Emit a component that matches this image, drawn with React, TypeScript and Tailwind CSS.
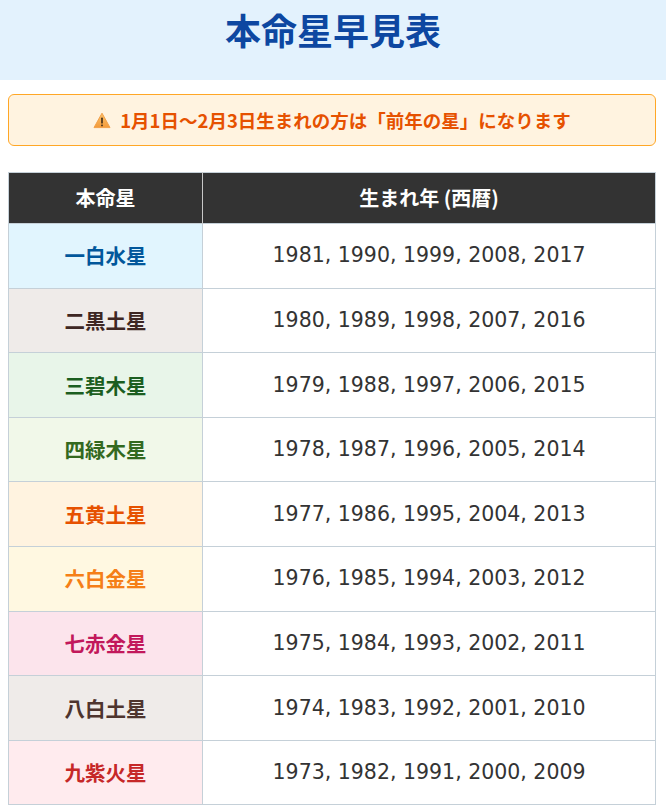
import React from "react";

const rows = [
  { name: "一白水星", bg: "bg-[#e1f5fe]", fg: "text-[#01579b]", years: "1981, 1990, 1999, 2008, 2017" },
  { name: "二黒土星", bg: "bg-[#efebe9]", fg: "text-[#3e2723]", years: "1980, 1989, 1998, 2007, 2016" },
  { name: "三碧木星", bg: "bg-[#e8f5e9]", fg: "text-[#1b5e20]", years: "1979, 1988, 1997, 2006, 2015" },
  { name: "四緑木星", bg: "bg-[#f1f8e9]", fg: "text-[#33691e]", years: "1978, 1987, 1996, 2005, 2014" },
  { name: "五黄土星", bg: "bg-[#fff3e0]", fg: "text-[#e65100]", years: "1977, 1986, 1995, 2004, 2013" },
  { name: "六白金星", bg: "bg-[#fff8e1]", fg: "text-[#f57f17]", years: "1976, 1985, 1994, 2003, 2012" },
  { name: "七赤金星", bg: "bg-[#fce4ec]", fg: "text-[#c2185b]", years: "1975, 1984, 1993, 2002, 2011" },
  { name: "八白土星", bg: "bg-[#efebe9]", fg: "text-[#4e342e]", years: "1974, 1983, 1992, 2001, 2010" },
  { name: "九紫火星", bg: "bg-[#ffebee]", fg: "text-[#c62828]", years: "1973, 1982, 1991, 2000, 2009" },
];

function WarnIcon() {
  return (
    <svg width="18" height="17" viewBox="0 0 18 17" className="shrink-0">
      <defs>
        <linearGradient id="wg" x1="0" y1="0" x2="0" y2="1">
          <stop offset="0" stopColor="#fbc26b" />
          <stop offset="1" stopColor="#f39a3a" />
        </linearGradient>
      </defs>
      <path d="M9 1.2 L17 15.6 L1 15.6 Z" fill="url(#wg)" stroke="#f2a14a" strokeWidth="1" strokeLinejoin="round" />
      <rect x="8.2" y="5.6" width="1.6" height="6" rx="0.6" fill="#3a2a1a" />
      <rect x="8.2" y="12.6" width="1.6" height="1.6" rx="0.5" fill="#3a2a1a" />
    </svg>
  );
}

export default function App() {
  const cjk = "font-['Noto_Sans_CJK_JP','Noto_Sans',sans-serif]";
  return (
    <div className={`w-[666px] bg-white ${cjk}`}>
      <div className="h-[80px] bg-[#e3f2fd] pt-[7px] text-center">
        <h1 className="text-[36px] leading-[44px] font-bold text-[#0d47a1]">本命星早見表</h1>
      </div>
      <div className="pl-[8px] pr-[10px] pt-[14px]">
        <div className="h-[52px] rounded-[6px] border-[1.5px] border-[#ffa726] bg-[#fff3e0] flex items-center justify-center gap-[9px]">
          <WarnIcon />
          <span className="text-[18.5px] font-bold text-[#e65100] leading-none">
            1月1日～2月3日生まれの方は「前年の星」になります
          </span>
        </div>
        <table className="mt-[26px] w-full border-collapse border border-[#c5d0d8]">
          <thead>
            <tr className="h-[51px] bg-[#333333]">
              <th className="w-[30%] border-r border-[#c8c8c8] text-white text-[20px] font-bold">本命星</th>
              <th className="text-white text-[20px] font-bold">生まれ年 (西暦)</th>
            </tr>
          </thead>
          <tbody>
            {rows.map((r) => (
              <tr key={r.name} className="h-[64.6px]">
                <td className={`${r.bg} ${r.fg} border border-[#c5d0d8] text-center text-[20.5px] font-bold`}>{r.name}</td>
                <td className="border border-[#c5d0d8] text-center text-[20.5px] text-[#333333] font-['DejaVu_Sans',sans-serif]">
                  {r.years}
                </td>
              </tr>
            ))}
          </tbody>
        </table>
      </div>
    </div>
  );
}
